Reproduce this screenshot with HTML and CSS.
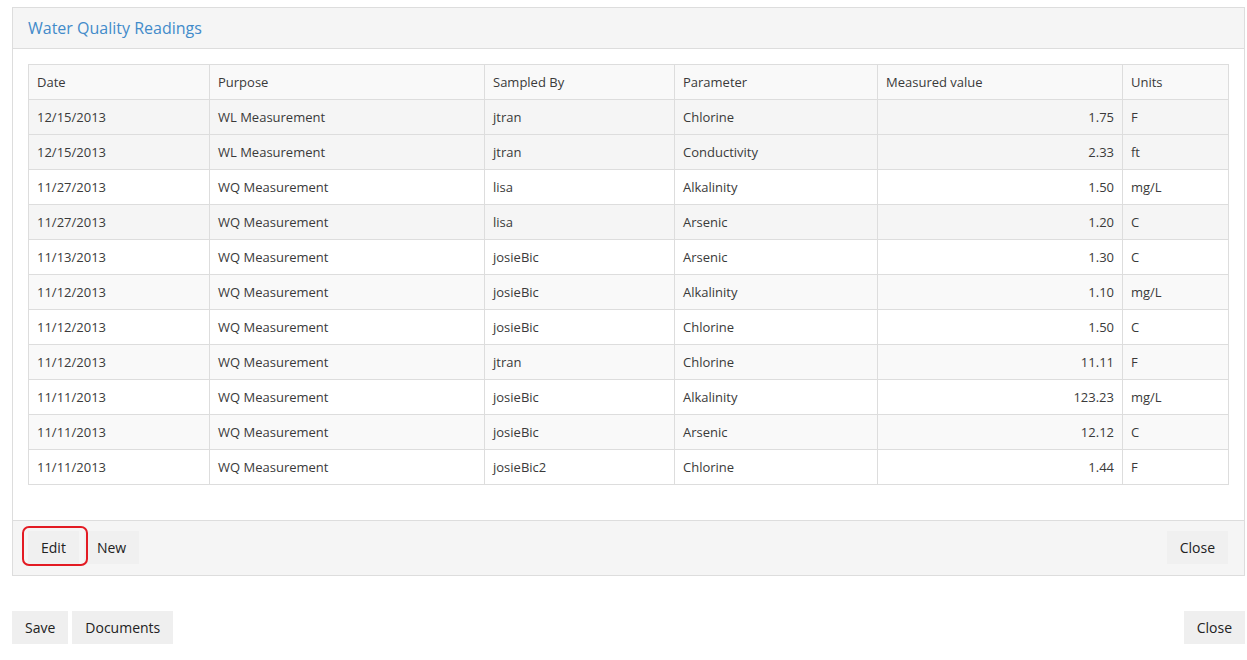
FILE: index.html
```html
<!DOCTYPE html>
<html>
<head>
<meta charset="utf-8">
<link rel="stylesheet" href="styles.css">
</head>
<body>
<div class="page">
  <div class="panel">
    <div class="panel-heading">Water Quality Readings</div>
    <div class="panel-body">
      <table class="grid">
        <thead>
          <tr><th class="c-date">Date</th><th class="c-purpose">Purpose</th><th class="c-by">Sampled By</th><th class="c-param">Parameter</th><th class="c-val">Measured value</th><th>Units</th></tr>
        </thead>
        <tbody>
          <tr class="sel"><td>12/15/2013</td><td>WL Measurement</td><td>jtran</td><td>Chlorine</td><td class="num">1.75</td><td>F</td></tr>
          <tr class="sel"><td>12/15/2013</td><td>WL Measurement</td><td>jtran</td><td>Conductivity</td><td class="num">2.33</td><td>ft</td></tr>
          <tr><td>11/27/2013</td><td>WQ Measurement</td><td>lisa</td><td>Alkalinity</td><td class="num">1.50</td><td>mg/L</td></tr>
          <tr class="sel"><td>11/27/2013</td><td>WQ Measurement</td><td>lisa</td><td>Arsenic</td><td class="num">1.20</td><td>C</td></tr>
          <tr><td>11/13/2013</td><td>WQ Measurement</td><td>josieBic</td><td>Arsenic</td><td class="num">1.30</td><td>C</td></tr>
          <tr><td>11/12/2013</td><td>WQ Measurement</td><td>josieBic</td><td>Alkalinity</td><td class="num">1.10</td><td>mg/L</td></tr>
          <tr><td>11/12/2013</td><td>WQ Measurement</td><td>josieBic</td><td>Chlorine</td><td class="num">1.50</td><td>C</td></tr>
          <tr><td>11/12/2013</td><td>WQ Measurement</td><td>jtran</td><td>Chlorine</td><td class="num">11.11</td><td>F</td></tr>
          <tr><td>11/11/2013</td><td>WQ Measurement</td><td>josieBic</td><td>Alkalinity</td><td class="num">123.23</td><td>mg/L</td></tr>
          <tr><td>11/11/2013</td><td>WQ Measurement</td><td>josieBic</td><td>Arsenic</td><td class="num">12.12</td><td>C</td></tr>
          <tr><td>11/11/2013</td><td>WQ Measurement</td><td>josieBic2</td><td>Chlorine</td><td class="num">1.44</td><td>F</td></tr>
        </tbody>
      </table>
    </div>
    <div class="panel-footer">
      <div class="btn-group">
        <span class="mark-wrap"><button class="btn">Edit</button><span class="mark"></span></span>
        <button class="btn btn-new">New</button>
      </div>
      <button class="btn">Close</button>
    </div>
  </div>
  <div class="actions">
    <div class="btn-group gap">
      <button class="btn">Save</button>
      <button class="btn">Documents</button>
    </div>
    <button class="btn">Close</button>
  </div>
</div>
</body>
</html>
```
FILE: styles.css
```css
* { box-sizing: border-box; }
html, body { margin: 0; padding: 0; background: #fff; }
body {
  font-family: "Open Sans", "Liberation Sans", sans-serif;
  font-size: 13px;
  color: #3a3a3a;
}
.page { padding: 7px 2px 0 12px; }
.panel {
  border: 1px solid #ddd;
  background: #fff;
}
.panel-heading {
  background: #f5f5f5;
  border-bottom: 1px solid #ddd;
  height: 41px;
  padding: 0 15px;
  line-height: 40px;
  font-size: 16px;
  color: #428bca;
}
.panel-body { padding: 15px 15px 35px; }
.grid {
  width: 100%;
  border-collapse: collapse;
  border: 1px solid #ddd;
  table-layout: fixed;
}
.grid th, .grid td {
  border: 1px solid #ddd;
  padding: 8px 8px;
  line-height: 18px;
  font-weight: normal;
  text-align: left;
  white-space: nowrap;
}
.grid thead th { background: #f9f9f9; }
.c-date { width: 181px; }
.c-purpose { width: 275px; }
.c-by { width: 190px; }
.c-param { width: 203px; }
.c-val { width: 245px; }
.grid tbody tr:nth-child(even) td { background: #f9f9f9; }
.grid tbody tr.sel td { background: #f5f5f5; }
.grid td.num { text-align: right; }
.panel-footer {
  background: #f5f5f5;
  border-top: 1px solid #ddd;
  padding: 10px 16px 11px 15px;
  display: flex;
  justify-content: space-between;
  align-items: center;
}
.btn-group { display: flex; align-items: center; }
.btn-group.gap { gap: 4px; }
.btn {
  font-family: "Open Sans", "Liberation Sans", sans-serif;
  font-size: 14px;
  color: #222;
  background: #efefef;
  border: none;
  height: 33px;
  padding: 0 13px;
  margin: 0;
  line-height: 33px;
  border-radius: 0;
}
.panel-footer .btn { background: #f0f0f0; }
.btn-new { margin-left: 5px; }
.mark-wrap { position: relative; display: inline-block; }
.mark-wrap .btn { display: block; }
.mark {
  position: absolute;
  left: -6px;
  top: -5px;
  width: 66px;
  height: 40px;
  border: 2px solid #e31b23;
  border-radius: 7px;
  pointer-events: none;
}
.actions {
  display: flex;
  justify-content: space-between;
  margin-top: 35px;
}
```
